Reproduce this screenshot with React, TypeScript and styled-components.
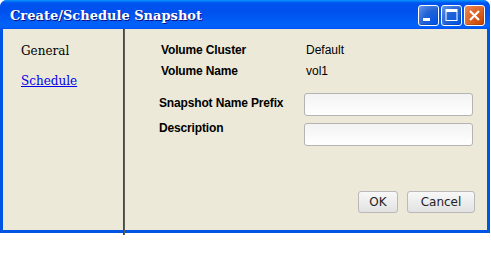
import React from "react";
import styled, { createGlobalStyle } from "styled-components";

const Global = createGlobalStyle`
  html, body { margin: 0; padding: 0; background: #ffffff; }
  #root { width: 491px; height: 268px; }
`;

const Window = styled.div`
  box-sizing: border-box;
  width: 490px;
  height: 233px;
  display: flex;
  flex-direction: column;
  background: #0054e3;
  border-radius: 7px 7px 0 0;
  overflow: visible;
`;

const TitleBar = styled.div`
  height: 29px;
  flex: none;
  display: flex;
  align-items: center;
  padding: 0 5px 0 10px;
  border-radius: 7px 7px 0 0;
  background: linear-gradient(
    to bottom,
    #0997ff 0%,
    #0053ee 10%,
    #0050ee 40%,
    #0062f8 85%,
    #0060fa 92%,
    #005bff 95%,
    #0050e8 100%
  );
`;

const Title = styled.div`
  flex: 1;
  color: #ffffff;
  font-family: "DejaVu Serif", serif;
  font-weight: bold;
  font-size: 13px;
  text-shadow: 1px 1px #0f1089;
  padding-top: 1px;
`;

const Controls = styled.div`
  display: flex;
  gap: 2px;
  padding-top: 1px;
`;

const CtrlButton = styled.div<{ $close?: boolean }>`
  box-sizing: border-box;
  width: 21px;
  height: 21px;
  border: 1px solid #ffffff;
  border-radius: 3px;
  display: flex;
  align-items: center;
  justify-content: center;
  background: ${(p) =>
    p.$close
      ? "radial-gradient(circle at 90% 90%, #cc4600 0%, #dc6527 55%, #f08b5e 100%)"
      : "radial-gradient(circle at 90% 90%, #0054e9 0%, #2263d5 55%, #6696eb 100%)"};
  box-shadow: inset -1px -1px rgba(0, 0, 0, 0.15);
`;

const Frame = styled.div`
  flex: 1;
  display: flex;
  margin: 0 3px 3px 3px;
  background: #ece9d8;
  min-height: 0;
`;

const Sidebar = styled.nav`
  width: 120px;
  flex: none;
  padding: 15px 0 0 18px;
  box-sizing: border-box;
  display: flex;
  flex-direction: column;
  gap: 15px;
  font-family: "DejaVu Serif", serif;
  font-size: 12px;
`;

const NavItem = styled.div<{ $link?: boolean }>`
  color: ${(p) => (p.$link ? "#0000ee" : "#000000")};
  text-decoration: ${(p) => (p.$link ? "underline" : "none")};
  line-height: 15px;
`;

const Divider = styled.div`
  width: 2px;
  flex: none;
  background: linear-gradient(to right, #3c3c3c, #6b6a64);
  margin-bottom: -5px;
  position: relative;
  z-index: 1;
`;

const Content = styled.div`
  flex: 1;
  display: flex;
  flex-direction: column;
  padding: 10px 14px 0 36px;
  font-family: "Liberation Sans", Arial, sans-serif;
  font-size: 12px;
`;

const InfoRow = styled.div`
  display: flex;
  align-items: center;
  height: 21px;
`;

const Label = styled.div`
  width: 145px;
  flex: none;
  font-weight: bold;
  letter-spacing: -0.15px;
  color: #000000;
  line-height: 14px;
`;

const Value = styled.div`
  color: #000000;
`;

const FieldRow = styled.div<{ $mt: number }>`
  display: flex;
  align-items: flex-start;
  margin-top: ${(p) => p.$mt}px;
  margin-left: -2px;
`;

const FieldLabel = styled(Label)<{ $offset: number }>`
  width: 145px;
  margin-top: ${(p) => p.$offset}px;
`;

const Input = styled.div`
  box-sizing: border-box;
  width: 169px;
  height: 23px;
  border: 1px solid #b4b4b4;
  border-radius: 3px;
  background: linear-gradient(to bottom, #f3f3f3, #ffffff);
`;

const Footer = styled.div`
  display: flex;
  justify-content: flex-end;
  gap: 9px;
  margin-top: auto;
  margin-bottom: 17px;
  margin-right: -2px;
`;

const Button = styled.div<{ $w: number }>`
  box-sizing: border-box;
  width: ${(p) => p.$w}px;
  height: 22px;
  border: 1px solid #b9b9b9;
  border-radius: 3px;
  background: linear-gradient(to bottom, #f8f8f8, #e2e2e2);
  display: flex;
  align-items: center;
  justify-content: center;
  font-family: "DejaVu Sans", sans-serif;
  font-size: 12px;
  color: #222222;
`;

export default function App() {
  return (
    <>
      <Global />
      <Window>
        <TitleBar>
          <Title>Create/Schedule Snapshot</Title>
          <Controls>
            <CtrlButton>
              <svg width="19" height="19" viewBox="0 0 19 19">
                <rect x="4" y="12" width="7" height="3" fill="#fff" />
              </svg>
            </CtrlButton>
            <CtrlButton>
              <svg width="19" height="19" viewBox="0 0 19 19">
                <rect x="4" y="3.5" width="11" height="11" fill="none" stroke="#fff" strokeWidth="1" />
                <rect x="4" y="3.5" width="11" height="2.5" fill="#fff" />
              </svg>
            </CtrlButton>
            <CtrlButton $close>
              <svg width="19" height="19" viewBox="0 0 19 19">
                <path d="M5 5 L14 14 M14 5 L5 14" stroke="#fff" strokeWidth="2.2" />
              </svg>
            </CtrlButton>
          </Controls>
        </TitleBar>
        <Frame>
          <Sidebar>
            <NavItem>General</NavItem>
            <NavItem $link>Schedule</NavItem>
          </Sidebar>
          <Divider />
          <Content>
            <InfoRow>
              <Label>Volume Cluster</Label>
              <Value>Default</Value>
            </InfoRow>
            <InfoRow>
              <Label>Volume Name</Label>
              <Value>vol1</Value>
            </InfoRow>
            <FieldRow $mt={12}>
              <FieldLabel $offset={3}>Snapshot Name Prefix</FieldLabel>
              <Input />
            </FieldRow>
            <FieldRow $mt={7}>
              <FieldLabel $offset={-2}>Description</FieldLabel>
              <Input />
            </FieldRow>
            <Footer>
              <Button $w={40}>OK</Button>
              <Button $w={68}>Cancel</Button>
            </Footer>
          </Content>
        </Frame>
      </Window>
    </>
  );
}
